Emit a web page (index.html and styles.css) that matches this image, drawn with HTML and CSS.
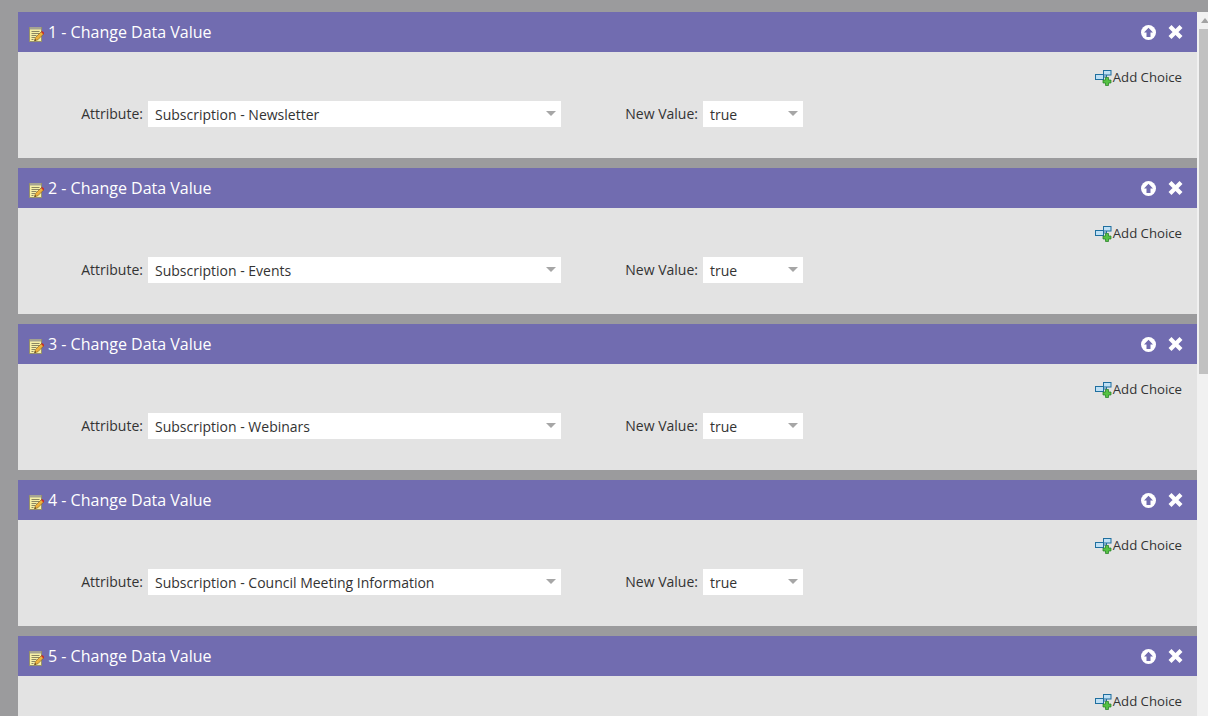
FILE: index.html
```html
<!DOCTYPE html>
<html lang="en">
<head>
<meta charset="utf-8">
<title>Change Data Value</title>
<link rel="stylesheet" href="styles.css">
</head>
<body>
<svg class="defs" width="0" height="0" aria-hidden="true">
  <defs>
    <symbol id="i-note" viewBox="0 0 15 16">
      <rect x=".5" y="1.500" width="12" height="14" fill="#f7f0a6" stroke="#96916c"/>
      <rect x="1" y="1" width="11" height="2.500" fill="#a5a392"/>
      <path d="M2.500 5.500h8M2.500 7.500h8M2.500 9.500h5M2.500 11.500h3.500M2.500 13.500h2" stroke="#6e6b50" stroke-width=".8"/>
      <path d="M5.500 14.800l1-3.300 6-6 2.300 2.300-6 6z" fill="#eeb23c" stroke="#7a561e" stroke-width=".6"/>
      <path d="M12 6l2.400 2.400.6-.7c.3-.5 0-1-.3-1.400l-.8-.8c-.4-.3-.9-.5-1.300-.1z" fill="#c5302a"/>
      <path d="M5.500 14.800l.5-1.700 1.200 1.200z" fill="#3a2a12"/>
    </symbol>
    <symbol id="i-choice" viewBox="0 0 17 16">
      <rect x="8.500" y=".5" width="7.500" height="4.500" fill="#bfe0f5" stroke="#1f6f9f"/>
      <rect x=".5" y="4.500" width="8" height="5" fill="#bfe0f5" stroke="#1f6f9f"/>
      <path d="M8.500 7h3V5" stroke="#1f6f9f" fill="none"/>
      <path d="M10.500 7.500h3V10H16v3h-2.500v2.500h-3V13H8v-3h2.500z" fill="#56c244" stroke="#1f7d20" stroke-width=".7"/>
    </symbol>
    <symbol id="i-up" viewBox="0 0 15 15">
      <circle cx="7.500" cy="7.500" r="7.500" fill="#fff"/>
      <path d="M7.500 2.800L12 7.500H9.500V12h-4V7.500H3z" fill="#716cb0"/>
    </symbol>
    <symbol id="i-x" viewBox="0 0 15 14">
      <path d="M2 1.500l11 11M13 1.500l-11 11" stroke="#fff" stroke-width="4.200"/>
    </symbol>
  </defs>
</svg>
<div class="viewport">
  <main class="list">
    <section class="step">
      <header class="step-head">
        <svg class="ico-note"><use href="#i-note"/></svg>
        <h2 class="step-title">1 - Change Data Value</h2>
        <span class="head-actions">
          <svg class="ico-up"><use href="#i-up"/></svg>
          <svg class="ico-x"><use href="#i-x"/></svg>
        </span>
      </header>
      <div class="step-body">
        <div class="choice-row"><a class="add-choice"><svg class="ico-choice"><use href="#i-choice"/></svg>Add Choice</a></div>
        <div class="fields">
          <span class="lbl lbl-attr">Attribute:</span>
          <div class="select select-attr"><span>Subscription - Newsletter</span><i class="caret"></i></div>
          <span class="lbl lbl-val">New Value:</span>
          <div class="select select-val"><span>true</span><i class="caret"></i></div>
        </div>
      </div>
    </section>
    <section class="step">
      <header class="step-head">
        <svg class="ico-note"><use href="#i-note"/></svg>
        <h2 class="step-title">2 - Change Data Value</h2>
        <span class="head-actions">
          <svg class="ico-up"><use href="#i-up"/></svg>
          <svg class="ico-x"><use href="#i-x"/></svg>
        </span>
      </header>
      <div class="step-body">
        <div class="choice-row"><a class="add-choice"><svg class="ico-choice"><use href="#i-choice"/></svg>Add Choice</a></div>
        <div class="fields">
          <span class="lbl lbl-attr">Attribute:</span>
          <div class="select select-attr"><span>Subscription - Events</span><i class="caret"></i></div>
          <span class="lbl lbl-val">New Value:</span>
          <div class="select select-val"><span>true</span><i class="caret"></i></div>
        </div>
      </div>
    </section>
    <section class="step">
      <header class="step-head">
        <svg class="ico-note"><use href="#i-note"/></svg>
        <h2 class="step-title">3 - Change Data Value</h2>
        <span class="head-actions">
          <svg class="ico-up"><use href="#i-up"/></svg>
          <svg class="ico-x"><use href="#i-x"/></svg>
        </span>
      </header>
      <div class="step-body">
        <div class="choice-row"><a class="add-choice"><svg class="ico-choice"><use href="#i-choice"/></svg>Add Choice</a></div>
        <div class="fields">
          <span class="lbl lbl-attr">Attribute:</span>
          <div class="select select-attr"><span>Subscription - Webinars</span><i class="caret"></i></div>
          <span class="lbl lbl-val">New Value:</span>
          <div class="select select-val"><span>true</span><i class="caret"></i></div>
        </div>
      </div>
    </section>
    <section class="step">
      <header class="step-head">
        <svg class="ico-note"><use href="#i-note"/></svg>
        <h2 class="step-title">4 - Change Data Value</h2>
        <span class="head-actions">
          <svg class="ico-up"><use href="#i-up"/></svg>
          <svg class="ico-x"><use href="#i-x"/></svg>
        </span>
      </header>
      <div class="step-body">
        <div class="choice-row"><a class="add-choice"><svg class="ico-choice"><use href="#i-choice"/></svg>Add Choice</a></div>
        <div class="fields">
          <span class="lbl lbl-attr">Attribute:</span>
          <div class="select select-attr"><span>Subscription - Council Meeting Information</span><i class="caret"></i></div>
          <span class="lbl lbl-val">New Value:</span>
          <div class="select select-val"><span>true</span><i class="caret"></i></div>
        </div>
      </div>
    </section>
    <section class="step">
      <header class="step-head">
        <svg class="ico-note"><use href="#i-note"/></svg>
        <h2 class="step-title">5 - Change Data Value</h2>
        <span class="head-actions">
          <svg class="ico-up"><use href="#i-up"/></svg>
          <svg class="ico-x"><use href="#i-x"/></svg>
        </span>
      </header>
      <div class="step-body">
        <div class="choice-row"><a class="add-choice"><svg class="ico-choice"><use href="#i-choice"/></svg>Add Choice</a></div>
      </div>
    </section>
  </main>
  <div class="scrollbar">
    <i class="scroll-arrow"></i>
    <div class="scroll-thumb"></div>
  </div>
</div>
</body>
</html>
```
FILE: styles.css
```css
* { box-sizing: border-box; }
html, body { margin: 0; height: 100%; overflow: hidden; }
body { background: #9b9b9d; font-family: "Open Sans", "Liberation Sans", sans-serif; color: #333; }
.defs { display: block; height: 0; }
.viewport { display: flex; height: 716px; overflow: hidden; padding-top: 12px; }
.list { flex: 1; min-width: 0; padding-left: 18px; display: flex; flex-direction: column; gap: 10px; overflow: hidden; }
.step { flex: none; }
.step-head { height: 40px; background: #716cb0; display: flex; align-items: center; padding: 0 14px 0 11px; color: #fff; }
.ico-note { width: 15px; height: 16px; margin: 3px 4px 0 0; flex: none; }
.step-title { margin: 0; font-size: 16px; font-weight: 400; line-height: 40px; }
.head-actions { margin-left: auto; display: flex; align-items: center; gap: 12px; }
.ico-up { width: 15px; height: 15px; display: block; }
.ico-x { width: 15px; height: 14px; display: block; }
.step-body { height: 106px; background: #e3e3e3; }
.choice-row { display: flex; justify-content: flex-end; padding: 16px 15px 0 0; height: 49px; }
.add-choice { display: flex; align-items: center; height: 18px; font-size: 13.2px; color: #333; }
.ico-choice { width: 17px; height: 16px; margin-right: 1px; margin-top: 1px; }
.fields { display: flex; align-items: center; height: 26px; font-size: 14px; }
.lbl { color: #333; padding-bottom: 2px; }
.lbl-attr { width: 130px; padding-right: 5px; text-align: right; }
.lbl-val { width: 142px; padding-right: 5px; text-align: right; }
.select { height: 26px; background: #fff; display: flex; align-items: center; justify-content: space-between; padding: 1px 5px 0 7px; color: #333; }
.select-attr { width: 413px; }
.select-val { width: 100px; }
.caret { width: 0; height: 0; border-left: 5px solid transparent; border-right: 5px solid transparent; border-top: 5px solid #a6a6a6; margin-top: -3px; }
.scrollbar { width: 11px; flex: none; background: #f1f1f1; position: relative; padding: 17px 0 0 2px; }
.scroll-arrow { position: absolute; top: 6px; left: 4px; width: 0; height: 0; border-left: 4px solid transparent; border-right: 4px solid transparent; border-bottom: 5px solid #a3a3a3; }
.scroll-thumb { height: 345px; background: #c1c1c1; }
```
